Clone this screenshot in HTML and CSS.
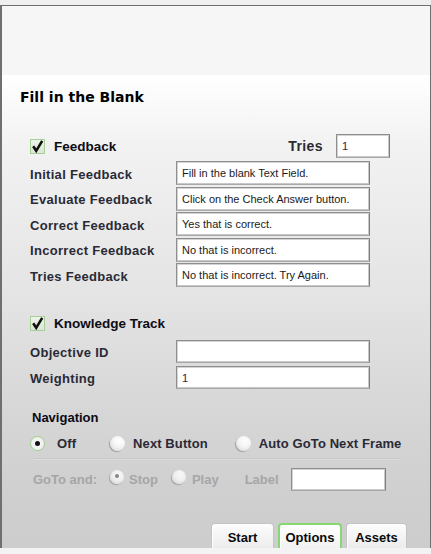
FILE: index.html
```html
<!DOCTYPE html>
<html>
<head>
<meta charset="utf-8">
<link rel="stylesheet" href="styles.css">
</head>
<body>
<div class="app">
  <div class="header"></div>
  <div class="panel">
    <h1 class="title">Fill in the Blank</h1>

    <div class="section">
      <div class="feedback-head">
        <label class="check-row">
          <span class="checkbox"><svg viewBox="0 0 15 15" width="15" height="15"><path d="M3.2 7.2 L6.2 11.8 L12.2 1.8" fill="none" stroke="#111" stroke-width="2.6" stroke-linejoin="miter"/></svg></span>
          <span class="check-text">Feedback</span>
        </label>
        <div class="tries">
          <span class="tries-label">Tries</span>
          <div class="field tries-field"><span class="val purple">1</span></div>
        </div>
      </div>

      <div class="grid feedback-grid">
        <span class="lbl">Initial Feedback</span>
        <div class="field"><span class="val">Fill in the blank Text Field.</span></div>
        <span class="lbl">Evaluate Feedback</span>
        <div class="field"><span class="val">Click on the Check Answer button.</span></div>
        <span class="lbl">Correct Feedback</span>
        <div class="field"><span class="val">Yes that is correct.</span></div>
        <span class="lbl">Incorrect Feedback</span>
        <div class="field"><span class="val">No that is incorrect.</span></div>
        <span class="lbl">Tries Feedback</span>
        <div class="field"><span class="val">No that is incorrect. Try Again.</span></div>
      </div>

      <label class="check-row kt">
        <span class="checkbox"><svg viewBox="0 0 15 15" width="15" height="15"><path d="M3.2 7.2 L6.2 11.8 L12.2 1.8" fill="none" stroke="#111" stroke-width="2.6" stroke-linejoin="miter"/></svg></span>
        <span class="check-text">Knowledge Track</span>
      </label>

      <div class="grid kt-grid">
        <span class="lbl">Objective ID</span>
        <div class="field"><span class="val"></span></div>
        <span class="lbl">Weighting</span>
        <div class="field"><span class="val purple">1</span></div>
      </div>

      <div class="nav-title">Navigation</div>
      <div class="radio-row">
        <span class="radio-item off"><span class="radio selected"></span><span class="rtext t-off">Off</span></span>
        <span class="radio-item next"><span class="radio"></span><span class="rtext">Next Button</span></span>
        <span class="radio-item auto"><span class="radio"></span><span class="rtext">Auto GoTo Next Frame</span></span>
      </div>
      <div class="separator"></div>
      <div class="goto-row">
        <span class="dis goto-lbl">GoTo and:</span>
        <span class="radio-item stop"><span class="radio small selected-dis"></span><span class="dis rt-stop">Stop</span></span>
        <span class="radio-item play"><span class="radio small dis-radio"></span><span class="dis rt-play">Play</span></span>
        <span class="dis label-lbl">Label</span>
        <div class="field label-field"></div>
      </div>
    </div>

    <div class="tabs">
      <div class="tab t-start">Start</div>
      <div class="tab t-options active">Options</div>
      <div class="tab t-assets">Assets</div>
    </div>
  </div>
</div>
</body>
</html>
```

FILE: styles.css
```css
html, body {
  margin: 0;
  padding: 0;
}
body {
  background: #f3f3f3;
  width: 431px;
  height: 554px;
  overflow: hidden;
  font-family: "Liberation Sans", Arial, sans-serif;
}
body::before {
  content: "";
  display: block;
  height: 5px;
  background: #efefef;
}
.app {
  box-sizing: border-box;
  width: 431px;
  height: 543px;
  border: 1px solid #6f6f6f;
  border-left-width: 2px;
  border-bottom: 0;
  display: flex;
  flex-direction: column;
}
.header {
  height: 69px;
  background: #f6f6f6;
  flex: none;
}
.panel {
  flex: 1;
  display: flex;
  flex-direction: column;
  background: linear-gradient(to bottom, #ffffff 0px, #f2f2f2 70px, #e4e4e4 220px, #d6d6d6 340px, #cfcfcf 420px, #cdcdcd 473px);
}
.title {
  margin: 14px 0 0 18px;
  font-family: "DejaVu Sans", Verdana, sans-serif;
  font-weight: bold;
  font-size: 14px;
  line-height: 16px;
  color: #000;
}
.section {
  padding-left: 28px;
}
.feedback-head {
  margin-top: 29px;
  width: 360px;
  height: 24px;
  display: flex;
  align-items: center;
  justify-content: space-between;
}
.check-row {
  display: flex;
  align-items: center;
  height: 16px;
}
.checkbox {
  box-sizing: border-box;
  width: 15px;
  height: 15px;
  border: 1px solid #a9cf98;
  background: linear-gradient(to bottom, #eef5ea, #d9e8d2);
  display: flex;
  align-items: center;
  justify-content: center;
  overflow: visible;
}
.checkbox svg {
  display: block;
  flex: none;
  overflow: visible;
}
.check-text {
  margin-left: 9px;
  font-weight: bold;
  font-size: 13.5px;
  color: #0c0c14;
}
.tries {
  display: flex;
  align-items: center;
}
.tries-label {
  font-weight: bold;
  font-size: 14px;
  letter-spacing: 0.4px;
  color: #2b2b33;
  margin-right: 13px;
}
.field {
  box-sizing: border-box;
  background: #fff;
  border: 1px solid #8e8e8e;
  border-right-color: #7e7e7e;
  border-bottom-color: #a8a8a8;
  box-shadow: inset 1px 1px 0 #d4d4d4, inset -1px -1px 0 #c8c8c8;
  display: flex;
  align-items: center;
  padding-left: 5px;
}
.grid .field {
  align-self: stretch;
}
.tries-field {
  width: 54px;
  height: 24px;
}
.val {
  font-size: 11px;
  color: #1a1a1a;
}
.val.purple {
  color: #3c1848;
}
.grid {
  display: grid;
  grid-template-columns: 146px 194px;
  align-items: center;
}
.feedback-grid {
  margin-top: 3px;
  grid-auto-rows: 24px;
  row-gap: 1.5px;
}
.lbl {
  font-weight: bold;
  font-size: 13px;
  letter-spacing: 0.3px;
  color: #2a2a36;
  padding-top: 2px;
}
.kt {
  margin-top: 28px;
}
.kt-grid {
  margin-top: 9px;
  grid-auto-rows: 23px;
  row-gap: 3px;
}
.nav-title {
  margin-top: 21px;
  margin-left: 2px;
  font-weight: bold;
  font-size: 13px;
  line-height: 16px;
  color: #0a0a14;
}
.radio-row {
  margin-top: 9px;
  height: 16px;
  display: flex;
  align-items: center;
}
.radio-item {
  display: flex;
  align-items: center;
}
.radio {
  box-sizing: border-box;
  width: 15px;
  height: 15px;
  border-radius: 50%;
  background: radial-gradient(circle at 60% 35%, #ffffff 0%, #f4f4f4 45%, #d0d0d0 100%);
  box-shadow: -1px 1px 1px rgba(0,0,0,0.25);
  position: relative;
  flex: none;
}
.radio.selected {
  border: 1.5px solid #9fd08a;
  background: radial-gradient(circle, #fafafa 0%, #eeeeee 70%, #dcdcdc 100%);
  box-shadow: none;
}
.radio.selected::after, .radio.selected-dis::after {
  content: "";
  position: absolute;
  left: 50%;
  top: 50%;
  width: 5px;
  height: 5px;
  margin: -2.5px 0 0 -2.5px;
  border-radius: 50%;
  background: #111;
}
.radio.selected-dis::after {
  background: #7a7a7a;
  width: 4px;
  height: 4px;
  margin: -3px 0 0 -2px;
}
.radio.small {
  width: 14px;
  height: 14px;
  opacity: 0.85;
}
.rtext {
  font-weight: bold;
  font-size: 13px;
  letter-spacing: 0.1px;
  color: #2a2a36;
  margin-left: 8px;
}
.t-off {
  margin-left: 12px;
}
.radio-item.next {
  margin-left: 34px;
}
.radio-item.auto {
  margin-left: 28px;
}
.separator {
  margin-top: 7px;
  margin-left: 4px;
  width: 367px;
  height: 1px;
  background: #c9c9c9;
  border-bottom: 1px solid #dcdcdc;
}
.goto-row {
  margin-top: 8px;
  height: 23px;
  display: flex;
  align-items: center;
}
.dis {
  font-weight: bold;
  font-size: 13px;
  color: #a6a6a6;
}
.goto-lbl {
  margin-left: 3px;
  width: 77px;
}
.radio-item.stop .radio, .radio-item.play .radio {
  margin-top: -5px;
}
.rt-stop {
  margin-left: 5px;
}
.radio-item.play {
  margin-left: 14px;
}
.rt-play {
  margin-left: 6px;
}
.label-lbl {
  margin-left: 26px;
}
.label-field {
  margin-left: 12px;
  width: 95px;
  height: 23px;
}
.tabs {
  margin-top: auto;
  display: flex;
  justify-content: flex-end;
  gap: 4px;
  padding-right: 23px;
}
.tab {
  box-sizing: border-box;
  height: 25px;
  border: 1px solid #c4c4c4;
  border-bottom: 0;
  border-radius: 4px 4px 0 0;
  background: linear-gradient(to bottom, #fdfdfd, #ececec);
  box-shadow: inset 1px 1px 0 #ffffff;
  font-weight: bold;
  font-size: 13px;
  color: #0a0a0a;
  display: flex;
  align-items: center;
  justify-content: center;
  padding-top: 3px;
}
.t-start { width: 63px; }
.t-options {
  width: 64px;
  border: 2px solid #86d870;
  border-bottom: 0;
  background: linear-gradient(to bottom, #ffffff, #f1f1f1);
  padding-top: 2px;
}
.t-assets { width: 61px; }
```
